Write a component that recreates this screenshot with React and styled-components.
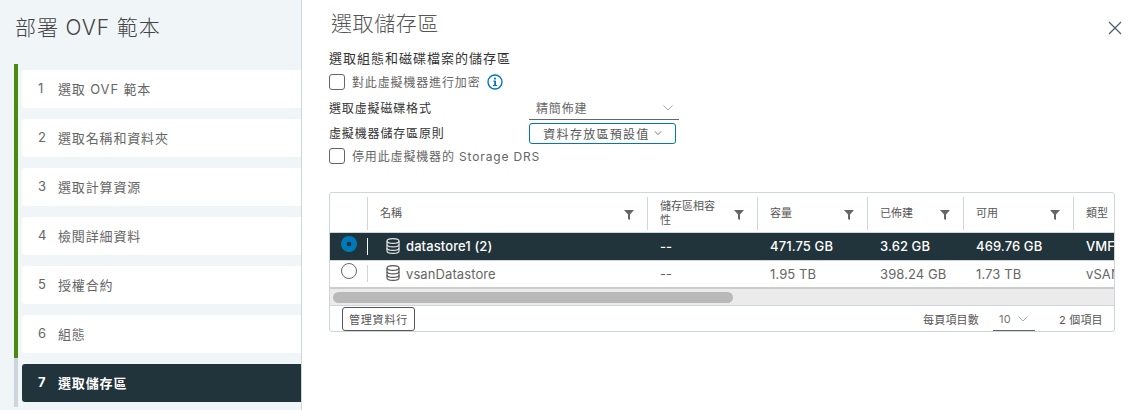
import styled, { createGlobalStyle } from "styled-components";

const GlobalStyle = createGlobalStyle`
    html, body {
        margin: 0;
        padding: 0;
        background: #fff;
    }
    body {
        font-family: "Inter", "Noto Sans CJK TC", sans-serif;
        color: #565656;
    }
`;

const Page = styled.div`
    display: flex;
    width: 1136px;
    height: 410px;
    overflow: hidden;
`;

// left wizard column
const Sidebar = styled.aside`
    width: 302px;
    height: 410px;
    flex-shrink: 0;
    box-sizing: border-box;
    background: #f0f5f8;
    border-right: 1px solid #ccd6dc;
    padding-left: 14px;
`;

const WizardTitle = styled.div`
    height: 64px;
    padding: 13px 0 0 1px;
    box-sizing: border-box;
    font-size: 21px;
    font-weight: 300;
    line-height: 30px;
    color: #444;
    letter-spacing: 0.9px;
`;

const Steps = styled.ol`
    list-style: none;
    margin: 0;
    padding: 0;
`;

const Step = styled.li`
    border-left: 4px solid ${(p) => (p.$done ? "#4a8a0d" : "#ccd6dc")};
    padding: 6px 0 5px 4px;
`;

const StepBox = styled.div`
    height: 38px;
    box-sizing: border-box;
    display: flex;
    align-items: center;
    padding: 0 0 2px 16px;
    border-radius: 3px 0 0 3px;
    background: ${(p) => (p.$active ? "#21333b" : "#fff")};
    color: ${(p) => (p.$active ? "#fff" : "#666")};
    font-size: 13px;
    letter-spacing: 0.85px;
    font-weight: ${(p) => (p.$active ? 700 : 400)};
`;

const StepNum = styled.span`
    width: 20px;
`;

// right side
const Main = styled.main`
    flex: 1;
    min-width: 0;
    padding: 0 14px 0 27px;
`;

const HeadRow = styled.div`
    display: flex;
    justify-content: space-between;
    height: 50px;
    padding: 9px 0 0 2px;
    box-sizing: border-box;
`;

const Heading = styled.h2`
    margin: 0;
    font-size: 21px;
    line-height: 30px;
    font-weight: 300;
    color: #555;
    letter-spacing: 0.6px;
`;

const CloseBtn = styled.svg`
    width: 14px;
    height: 14px;
    margin: 12px 0 0 0;
    stroke: #4c5f6b;
    stroke-width: 1.3;
`;

const Line = styled.div`
    display: flex;
    align-items: center;
    box-sizing: border-box;
    height: ${(p) => p.$h}px;
    padding-bottom: 2px;
    font-size: ${(p) => p.$size || 12}px;
    color: ${(p) => (p.$dim ? "#666" : "#333")};
    letter-spacing: ${(p) => (p.$size ? 1 : 0.85)}px;
`;

const Check = styled.span`
    width: 14px;
    height: 14px;
    border: 1px solid #666;
    border-radius: 3px;
    margin: 2px 7px 0 0;
    background: #fff;
`;

const InfoIcon = styled.svg`
    width: 16px;
    height: 16px;
    margin: 2px 0 0 6px;
`;

const FieldLabel = styled.span`
    width: 200px;
`;

const SelectBox = styled.div`
    width: 150px;
    height: 24px;
    box-sizing: border-box;
    margin-top: 2px;
    padding: 0 6px 0 7px;
    border-bottom: 1px solid #666;
    display: flex;
    align-items: center;
    justify-content: space-between;
    color: #666;
`;

const PolicyBtn = styled.button`
    width: 147px;
    height: 21px;
    box-sizing: border-box;
    margin-top: 2px;
    border: 1px solid #0079ad;
    border-radius: 3px;
    background: #fff;
    color: #565656;
    font: inherit;
    letter-spacing: 1.3px;
    padding: 0;
    display: flex;
    align-items: center;
    justify-content: center;
    gap: 4px;
`;

const Chevron = styled.svg`
    width: ${(p) => p.$w || 10}px;
    height: 6px;
    fill: none;
    stroke: ${(p) => p.$color || "#aaa"};
    stroke-width: 1;
`;

const Grid = styled.div`
    margin-top: 27px;
    width: 786px;
    height: 140px;
    box-sizing: border-box;
    border: 1px solid #ccd6dc;
    border-radius: 3px;
    overflow: hidden;
    background: #fff;
`;

const HeaderRow = styled.div`
    display: flex;
    height: 40px;
    box-sizing: border-box;
    border-bottom: 1px solid #ccd6dc;
    padding-top: 4px;
    padding-bottom: 2px;
`;

const HeadCell = styled.div`
    width: ${(p) => p.$w}px;
    flex-shrink: 0;
    box-sizing: border-box;
    padding: 0 ${(p) => (p.$last ? 0 : 12)}px 1px 12px;
    display: flex;
    align-items: center;
    justify-content: space-between;
    border-right: ${(p) => (p.$last ? "none" : "1px solid #ccd6dc")};
    font-size: 11px;
    line-height: 14px;
    color: #565656;
`;

const HeadText = styled.span`
    max-width: 58px;
    white-space: ${(p) => (p.$wrap ? "normal" : "nowrap")};
`;

const Filter = styled.svg`
    width: 10px;
    height: 10px;
    fill: #666;
    flex-shrink: 0;
    margin-right: 1px;
    margin-top: 3px;
`;

const Row = styled.div`
    display: flex;
    height: ${(p) => p.$h}px;
    padding-bottom: 1px;
    align-items: center;
    background: ${(p) => (p.$selected ? "#21333b" : "#fff")};
    color: ${(p) => (p.$selected ? "#fff" : "#666")};
    font-size: 13px;
    letter-spacing: 0.1px;
    font-weight: ${(p) => (p.$selected ? 500 : 400)};
    border-bottom: ${(p) => p.$border};
`;

const RadioCell = styled.div`
    width: 38px;
    height: 17px;
    flex-shrink: 0;
    box-sizing: border-box;
    padding-left: 11px;
    border-right: 1px solid ${(p) => (p.$selected ? "#fff" : "#ccd6dc")};
`;

const Radio = styled.span`
    display: block;
    width: 16px;
    height: 16px;
    box-sizing: border-box;
    margin-top: -2px;
    border-radius: 50%;
    background: ${(p) =>
        p.$selected ? "radial-gradient(circle, #21333b 0 2px, #0079b8 2.6px)" : "#fff"};
    border: ${(p) => (p.$selected ? "none" : "1px solid #666")};
`;

const NameCell = styled.div`
    width: 280px;
    flex-shrink: 0;
    box-sizing: border-box;
    padding-left: 18px;
    display: flex;
    align-items: center;
    gap: 6px;
`;

const DbIcon = styled.svg`
    width: 14px;
    height: 16px;
    fill: none;
    stroke: ${(p) => (p.$selected ? "#e4e8ea" : "#555")};
    stroke-width: 1.2;
    margin-top: -1px;
`;

const Cell = styled.div`
    width: ${(p) => p.$w}px;
    flex-shrink: 0;
    box-sizing: border-box;
    padding-left: 12px;
    white-space: nowrap;
`;

const Track = styled.div`
    height: 17px;
    box-sizing: border-box;
    background: #ebebeb;
    padding: 3px 0 0 3px;
    border-bottom: 1px solid #ccd6dc;
`;

const Thumb = styled.div`
    width: 400px;
    height: 11px;
    border-radius: 6px;
    background: #b9b9b9;
`;

const Footer = styled.div`
    display: flex;
    align-items: center;
    height: 25px;
    padding-left: 12px;
    font-size: 11px;
    color: #565656;
    letter-spacing: 0.2px;
`;

const ManageBtn = styled.button`
    width: 73px;
    height: 24px;
    box-sizing: border-box;
    border: 1px solid #555;
    border-radius: 3px;
    background: #fff;
    color: #565656;
    font: inherit;
    letter-spacing: 0.8px;
    padding: 0;
`;

const PerPage = styled.span`
    margin-left: 508px;
`;

const PageSize = styled.div`
    margin-left: 14px;
    width: 42px;
    height: 25px;
    box-sizing: border-box;
    padding: 2px 7px 0 6px;
    border-bottom: 1px solid #666;
    display: flex;
    align-items: center;
    justify-content: space-between;
    color: #777;
`;

const Total = styled.span`
    margin-left: 24px;
`;

const FilterGlyph = () => (
    <Filter viewBox="0 0 10 10">
        <polygon points="0,0 10,0 6,4.5 6,10 4,9 4,4.5" />
    </Filter>
);

const Db = ({ selected }) => (
    <DbIcon viewBox="0 0 14 16" $selected={selected}>
        <ellipse cx="7" cy="3" rx="6" ry="2.4" />
        <path d="M1 3v10c0 1.4 2.7 2.4 6 2.4s6-1 6-2.4V3" />
        <path d="M1 6.5c0 1.4 2.7 2.4 6 2.4s6-1 6-2.4M1 10c0 1.4 2.7 2.4 6 2.4s6-1 6-2.4" />
    </DbIcon>
);

const steps = ["選取 OVF 範本", "選取名稱和資料夾", "選取計算資源", "檢閱詳細資料", "授權合約", "組態", "選取儲存區"];

const rows = [
    { name: "datastore1 (2)", compat: "--", cap: "471.75 GB", prov: "3.62 GB", free: "469.76 GB", type: "VMFS", selected: true },
    { name: "vsanDatastore", compat: "--", cap: "1.95 TB", prov: "398.24 GB", free: "1.73 TB", type: "vSAN" },
];

const App = () => {
    return (
        <Page>
            <GlobalStyle />
            <Sidebar>
                <WizardTitle>部署 OVF 範本</WizardTitle>
                <Steps>
                    {steps.map((s, i) => (
                        <Step key={s} $done={i < 6}>
                            <StepBox $active={i === 6}>
                                <StepNum>{i + 1}</StepNum>
                                {s}
                            </StepBox>
                        </Step>
                    ))}
                </Steps>
            </Sidebar>

            <Main>
                <HeadRow>
                    <Heading>選取儲存區</Heading>
                    <CloseBtn viewBox="0 0 14 14">
                        <path d="M1 1l12 12M13 1L1 13" />
                    </CloseBtn>
                </HeadRow>

                <Line $h={17} $size={13}>選取組態和磁碟檔案的儲存區</Line>
                <Line $h={30} $dim>
                    <Check />
                    對此虛擬機器進行加密
                    <InfoIcon viewBox="0 0 16 16">
                        <circle cx="8" cy="8" r="7" fill="none" stroke="#0079b8" strokeWidth="1.4" />
                        <rect x="7.2" y="6.8" width="1.8" height="5" fill="#0079b8" />
                        <rect x="6" y="11" width="4.2" height="1.1" fill="#0079b8" />
                        <rect x="6.3" y="6.6" width="2" height="1" fill="#0079b8" />
                        <circle cx="8" cy="4.6" r="1.1" fill="#0079b8" />
                    </InfoIcon>
                </Line>
                <Line $h={22}>
                    <FieldLabel>選取虛擬磁碟格式</FieldLabel>
                    <SelectBox>
                        精簡佈建
                        <Chevron viewBox="0 0 10 6">
                            <path d="M0.5 0.5L5 5l4.5-4.5" />
                        </Chevron>
                    </SelectBox>
                </Line>
                <Line $h={28}>
                    <FieldLabel>虛擬機器儲存區原則</FieldLabel>
                    <PolicyBtn>
                        資料存放區預設值
                        <Chevron viewBox="0 0 10 6" $w={8} $color="#555">
                            <path d="M1 1l4 4 4-4" />
                        </Chevron>
                    </PolicyBtn>
                </Line>
                <Line $h={18} $dim>
                    <Check />
                    停用此虛擬機器的 Storage DRS
                </Line>

                <Grid>
                    <HeaderRow>
                        <HeadCell $w={38} />
                        <HeadCell $w={280}>
                            <HeadText>名稱</HeadText>
                            <FilterGlyph />
                        </HeadCell>
                        <HeadCell $w={110}>
                            <HeadText $wrap>儲存區相容性</HeadText>
                            <FilterGlyph />
                        </HeadCell>
                        <HeadCell $w={110}>
                            <HeadText>容量</HeadText>
                            <FilterGlyph />
                        </HeadCell>
                        <HeadCell $w={96}>
                            <HeadText>已佈建</HeadText>
                            <FilterGlyph />
                        </HeadCell>
                        <HeadCell $w={110}>
                            <HeadText>可用</HeadText>
                            <FilterGlyph />
                        </HeadCell>
                        <HeadCell $w={42} $last>
                            <HeadText>類型</HeadText>
                        </HeadCell>
                    </HeaderRow>

                    {rows.map((r) => (
                        <Row
                            key={r.name}
                            $selected={r.selected}
                            $h={r.selected ? 26 : 25}
                            $border={r.selected ? "1px solid #ccd6dc" : "2px solid #ccc"}
                        >
                            <RadioCell $selected={r.selected}>
                                <Radio $selected={r.selected} />
                            </RadioCell>
                            <NameCell>
                                <Db selected={r.selected} />
                                {r.name}
                            </NameCell>
                            <Cell $w={110}>{r.compat}</Cell>
                            <Cell $w={110}>{r.cap}</Cell>
                            <Cell $w={96}>{r.prov}</Cell>
                            <Cell $w={110}>{r.free}</Cell>
                            <Cell $w={42}>{r.type}</Cell>
                        </Row>
                    ))}

                    <Track>
                        <Thumb />
                    </Track>

                    <Footer>
                        <ManageBtn>管理資料行</ManageBtn>
                        <PerPage>每頁項目數</PerPage>
                        <PageSize>
                            10
                            <Chevron viewBox="0 0 10 6">
                                <path d="M0.5 0.5L5 5l4.5-4.5" />
                            </Chevron>
                        </PageSize>
                        <Total>2 個項目</Total>
                    </Footer>
                </Grid>
            </Main>
        </Page>
    );
};

export default App;
